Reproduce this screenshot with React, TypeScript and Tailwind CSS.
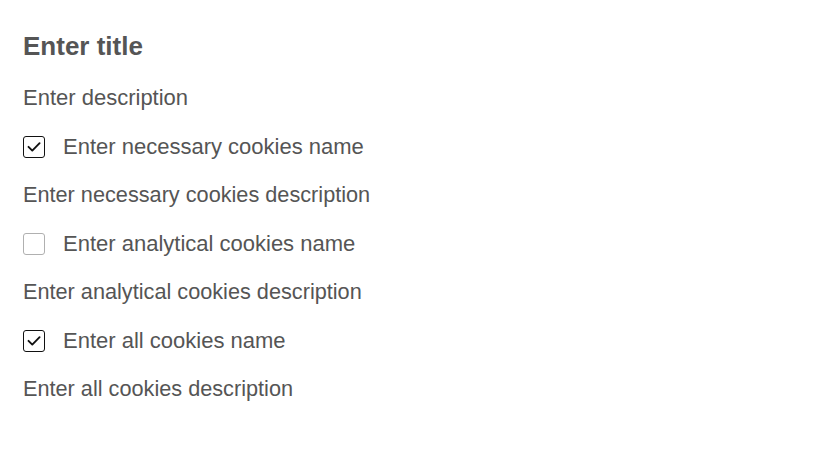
import React, { useState } from "react";

type Item = { key: string; name: string; description: string; checked: boolean };

const items: Item[] = [
  { key: "necessary", name: "Enter necessary cookies name", description: "Enter necessary cookies description", checked: true },
  { key: "analytical", name: "Enter analytical cookies name", description: "Enter analytical cookies description", checked: false },
  { key: "all", name: "Enter all cookies name", description: "Enter all cookies description", checked: true },
];

const Box: React.FC<{ checked: boolean; onToggle: () => void }> = ({ checked, onToggle }) => (
  <button
    onClick={onToggle}
    className={`flex h-[22px] w-[22px] shrink-0 items-center justify-center rounded-[3px] border bg-white ${
      checked ? "border-[#111111]" : "border-[#b0b0b0]"
    }`}
  >
    {checked && (
      <svg width="16" height="16" viewBox="0 0 16 16" fill="none">
        <path d="M2.5 7.8 L6.3 11.6 L13.6 4.2" stroke="#111111" strokeWidth="1.9" strokeLinecap="round" strokeLinejoin="round" />
      </svg>
    )}
  </button>
);

export default function App() {
  const [state, setState] = useState<Record<string, boolean>>(
    Object.fromEntries(items.map((i) => [i.key, i.checked]))
  );

  return (
    <div className="min-h-screen bg-white px-[23px] pt-[28px] text-[#555555] font-['Liberation_Sans',Arial,sans-serif]">
      <h1 className="text-[26px] font-bold leading-[36px]">Enter title</h1>
      <p className="mt-[19px] text-[22px] leading-[30px]">Enter description</p>
      {items.map((item) => (
        <div key={item.key}>
          <div className="mt-[18.5px] flex h-[30px] items-center gap-[18px]">
            <Box checked={state[item.key]} onToggle={() => setState((s) => ({ ...s, [item.key]: !s[item.key] }))} />
            <span className="text-[22px] leading-[30px]">{item.name}</span>
          </div>
          <p className="mt-[18.5px] text-[21.7px] leading-[30px]">{item.description}</p>
        </div>
      ))}
    </div>
  );
}
